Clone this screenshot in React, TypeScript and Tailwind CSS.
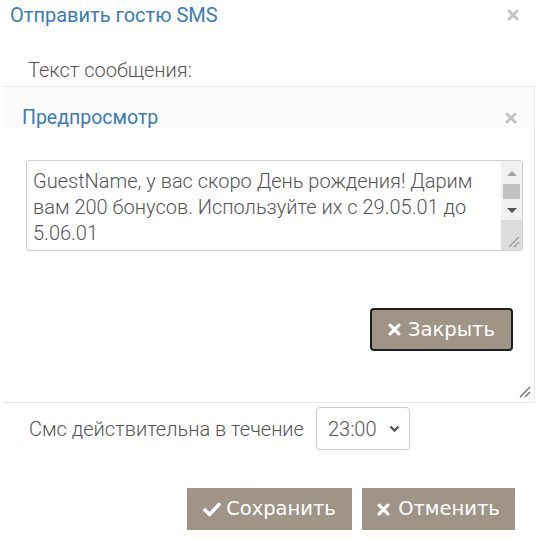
import type { FC } from 'react';

const CloseGlyph: FC<{ size?: number; color?: string }> = ({ size = 12, color = '#c4c4c4' }) => (
  <svg width={size} height={size} viewBox="0 0 12 12">
    <path d="M2 2 L10 10 M10 2 L2 10" stroke={color} strokeWidth="3" strokeLinecap="round" />
  </svg>
);

const CheckGlyph: FC = () => (
  <svg width="18" height="15" viewBox="0 0 18 15">
    <path d="M2 8 L6.5 12.5 L16 2.5" stroke="#fff" strokeWidth="3.6" fill="none" strokeLinecap="round" strokeLinejoin="round" />
  </svg>
);

const Grip: FC<{ color?: string }> = ({ color = '#777' }) => (
  <svg width="12" height="12" viewBox="0 0 12 12">
    <path d="M11 1 L1 11 M11 6 L6 11" stroke={color} strokeWidth="1.2" />
  </svg>
);

const App: FC = () => {
  return (
    <div className="relative h-[540px] w-[540px] overflow-hidden bg-white font-['Roboto',sans-serif]">
      <div className="flex h-[30px] items-center justify-between pl-[10px] pr-[21px]">
        <span className="text-[20px] leading-[30px] text-[#3a7cb6]">Отправить гостю SMS</span>
        <CloseGlyph />
      </div>

      <div className="mt-[28px] pl-[28px] text-[20px] font-light leading-[24px] text-[#555]">Текст сообщения:</div>

      <div className="relative ml-[3px] mr-[5px] mt-[4px] flex h-[317px] flex-col border-b border-r border-t border-[#e9e9e9]">
        <div className="flex h-[42px] items-start justify-between bg-[#fbfbfb] pl-[19px] pr-[17px] pt-[18px]">
          <span className="text-[19.5px] leading-[26px] text-[#3a7cb6]">Предпросмотр</span>
          <span className="mt-[7px]">
            <CloseGlyph />
          </span>
        </div>

        <div className="pl-[23px] pt-[31px]">
          <div className="flex h-[91px] w-[497px] overflow-hidden rounded-[3px] border border-[#cfcfcf] bg-white">
            <div className="flex-1 pl-[6px] pt-[7px] text-[20px] font-light leading-[26px] text-[#555]">
              GuestName, у вас скоро День рождения! Дарим вам 200 бонусов. Используйте их с 29.05.01 до 5.06.01
            </div>
            <div className="flex w-[21px] flex-col items-center bg-[#f1f1f1]">
              <div className="mt-[10px] h-0 w-0 border-x-[5px] border-b-[5px] border-x-transparent border-b-[#a3a3a3]" />
              <div className="mt-[8px] h-[15px] w-[17px] bg-[#c1c1c1]" />
              <div className="mt-[9px] h-0 w-0 border-x-[5px] border-t-[5px] border-x-transparent border-t-[#505050]" />
              <div className="mt-[7px] flex w-full flex-1 items-end justify-end bg-[#dcdcdc] pb-[2px] pr-[2px]">
                <Grip color="#999" />
              </div>
            </div>
          </div>
        </div>

        <div className="mt-[57px] flex justify-end pr-[21px]">
          <button
            type="button"
            className="flex h-[43px] w-[143px] items-center justify-center gap-[7px] rounded-[4px] border-2 border-[#1e1e1e] bg-[#a09487] font-['DejaVu_Sans',sans-serif] text-[19.5px] text-white"
          >
            <CloseGlyph size={13} color="#fff" />
            Закрыть
          </button>
        </div>

        <div className="absolute bottom-[4px] right-[3px]">
          <Grip color="#6a6a6a" />
        </div>
      </div>

      <div className="mt-[4px] flex items-center gap-[12px] pl-[29px]">
        <span className="text-[20px] font-light text-[#555]">Смс действительна в течение</span>
        <div className="flex h-[43px] w-[94px] items-center justify-between rounded-[4px] border border-[#cccccc] pl-[11px] pr-[9px] text-[20px] font-light text-[#555]">
          23:00
          <svg width="11" height="8" viewBox="0 0 11 8">
            <path d="M1.5 1.5 L5.5 5.5 L9.5 1.5" stroke="#555" strokeWidth="2.4" fill="none" />
          </svg>
        </div>
      </div>

      <div className="mt-[38px] flex justify-end gap-[10px] pr-[25px]">
        <button
          type="button"
          className="flex h-[42px] w-[165px] items-center justify-center gap-[5px] bg-[#a09487] font-['DejaVu_Sans',sans-serif] text-[19.5px] text-white"
        >
          <CheckGlyph />
          Сохранить
        </button>
        <button
          type="button"
          className="flex h-[42px] w-[153px] items-center justify-center gap-[8px] bg-[#a09487] font-['DejaVu_Sans',sans-serif] text-[19.5px] text-white"
        >
          <CloseGlyph size={13} color="#fff" />
          Отменить
        </button>
      </div>
    </div>
  );
};

export default App;
